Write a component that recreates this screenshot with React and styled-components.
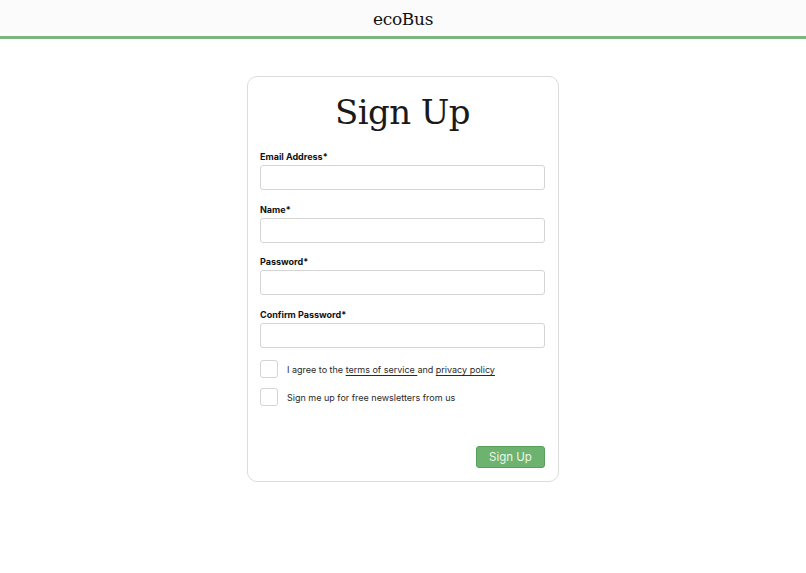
import React from "react";
import styled, { createGlobalStyle } from "styled-components";

const Global = createGlobalStyle`
  * { box-sizing: border-box; }
  body { margin: 0; background: #fff; font-family: Inter, "Noto Sans", sans-serif; color: #111; }
`;

const Header = styled.header`
  height: 39px;
  background: #fbfbfb;
  border-bottom: 3px solid #7cb67e;
  display: flex;
  align-items: center;
  justify-content: center;
`;

const Brand = styled.div`
  font-family: "DejaVu Serif", "Liberation Serif", serif;
  font-size: 17px;
  color: #111;
  letter-spacing: -0.3px;
  margin-top: 2px;
`;

const Main = styled.main`
  display: flex;
  justify-content: center;
  padding-top: 37px;
`;

const Card = styled.form`
  width: 312px;
  height: 406px;
  border: 1.5px solid #dcdcdc;
  border-radius: 10px;
  padding: 11px 13px 13px 12px;
  display: flex;
  flex-direction: column;
`;

const Title = styled.h1`
  margin: 0 0 13px;
  font-family: "DejaVu Serif", "Liberation Serif", serif;
  font-weight: 300;
  font-size: 34px;
  line-height: 48px;
  text-align: center;
  color: #1a1a1a;
  letter-spacing: -0.6px;
`;

const Field = styled.div`
  display: flex;
  flex-direction: column;
  margin-bottom: 11.5px;
`;

const Label = styled.label`
  font-size: 9px;
  font-weight: 700;
  line-height: 15px;
  margin-bottom: 1px;
  color: #111;
`;

const Input = styled.input`
  height: 25px;
  width: 100%;
  border: 1.5px solid #d4d4d4;
  border-radius: 3px;
  background: #fff;
  outline: none;
`;

const CheckRow = styled.div`
  display: flex;
  align-items: center;
  gap: 9px;
  height: 18px;
  margin-top: ${(p) => p.$top}px;
  font-size: 9px;
  color: #2a2a2a;
`;

const Box = styled.span`
  width: 18px;
  height: 18px;
  border: 1.5px solid #d4d4d4;
  border-radius: 3px;
  flex: none;
`;

const Link = styled.a`
  color: #2a2a2a;
  text-decoration: underline;
  text-underline-offset: 2px;
`;

const Footer = styled.div`
  margin-top: auto;
  display: flex;
  justify-content: flex-end;
`;

const Button = styled.button`
  width: 69px;
  height: 22px;
  background: #6db36f;
  border: 1.5px solid #5a9e5c;
  border-radius: 3px;
  color: #eaf6ea;
  font-family: Inter, "Noto Sans", sans-serif;
  font-size: 11.5px;
  padding: 0;
`;

const fields = ["Email Address*", "Name*", "Password*", "Confirm Password*"];

export default function App() {
  return (
    <>
      <Global />
      <Header>
        <Brand>ecoBus</Brand>
      </Header>
      <Main>
        <Card onSubmit={(e) => e.preventDefault()}>
          <Title>Sign Up</Title>
          {fields.map((f) => (
            <Field key={f}>
              <Label>{f}</Label>
              <Input type="text" />
            </Field>
          ))}
          <CheckRow $top={1}>
            <Box />
            <span>
              I agree to the <Link>terms of service </Link>and <Link>privacy policy</Link>
            </span>
          </CheckRow>
          <CheckRow $top={10}>
            <Box />
            <span>Sign me up for free newsletters from us</span>
          </CheckRow>
          <Footer>
            <Button type="submit">Sign Up</Button>
          </Footer>
        </Card>
      </Main>
    </>
  );
}
